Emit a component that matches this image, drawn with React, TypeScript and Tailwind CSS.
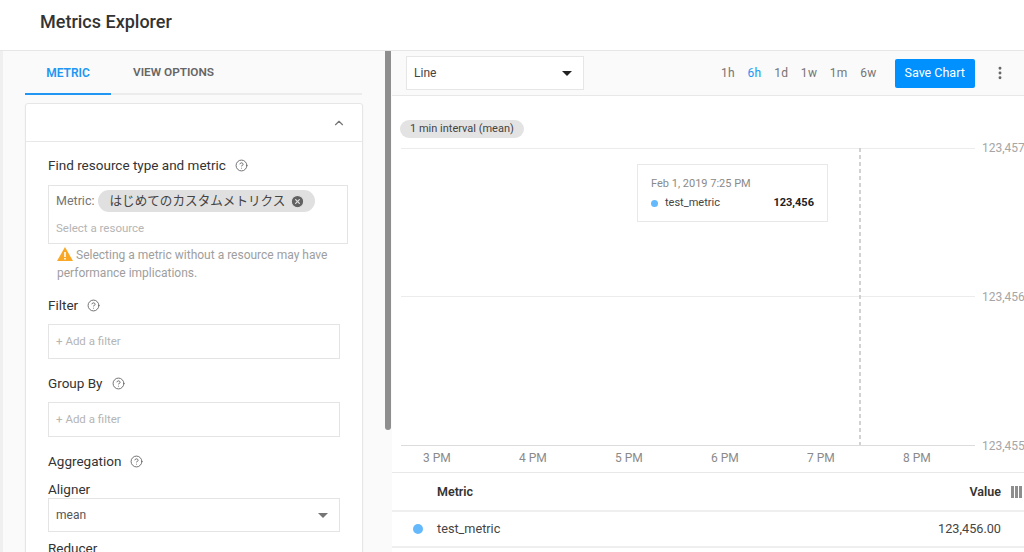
import { ChevronUp, CircleHelp, CircleX, EllipsisVertical } from 'lucide-react';

const RANGES = ['1h', '6h', '1d', '1w', '1m', '6w'];
const HOURS = [
  { label: '3 PM', left: 'left-[31px]' },
  { label: '4 PM', left: 'left-[127px]' },
  { label: '5 PM', left: 'left-[223px]' },
  { label: '6 PM', left: 'left-[319px]' },
  { label: '7 PM', left: 'left-[415px]' },
  { label: '8 PM', left: 'left-[511px]' },
];

function Caret({ className }: { className: string }) {
  return (
    <svg width="10" height="5" viewBox="0 0 10 5" className={className}>
      <path d="M0 0h10L5 5z" fill="currentColor" />
    </svg>
  );
}

function FieldLabel({ text, className }: { text: string; className: string }) {
  return (
    <div className={`flex items-center gap-[9px] text-[13.5px] leading-[20px] text-[#333] ${className}`}>
      <span>{text}</span>
      <CircleHelp className="size-[13px] text-[#666]" strokeWidth={1.7} />
    </div>
  );
}

function FilterInput() {
  return (
    <div className="flex h-[35px] w-[292px] items-center border border-[#e4e4e4] bg-white pl-[7px] text-[11.5px] text-[#b5b5b5]">
      + Add a filter
    </div>
  );
}

function LeftPanel() {
  return (
    <div className="relative h-full w-[392px] shrink-0 overflow-hidden border-l-[3px] border-[#efefef] bg-[#fafafa] pl-[22px]">
      <div className="flex h-[44px] w-[337px] border-b-2 border-[#ececec]">
        <div className="-mb-[2px] flex h-[44px] w-[86px] items-start justify-center border-b-2 border-[#2196f3] pt-[13px] text-[12px] font-semibold text-[#2196f3]">
          METRIC
        </div>
        <div className="ml-[22px] pt-[13px] text-[11.8px] font-semibold text-[#666]">VIEW OPTIONS</div>
      </div>

      <div className="mt-[8px] h-[460px] w-[338px] rounded-t-[3px] border border-[#e6e6e6] bg-white shadow-[0_1px_2px_rgba(0,0,0,0.06)]">
        <div className="flex h-[38px] items-center justify-end border-b border-[#e8e8e8] pr-[16px]">
          <ChevronUp className="size-[14px] text-[#757575]" strokeWidth={2} />
        </div>
        <div className="pl-[22px]">
          <FieldLabel text="Find resource type and metric" className="mt-[13px]" />
          <div className="mt-[10px] h-[59px] w-[300px] border border-[#e4e4e4] pl-[7px]">
            <div className="flex h-[29px] items-center pt-[1px] text-[12.5px] text-[#757575]">
              <span>Metric:</span>
              <div className="ml-[4px] flex h-[22px] w-[217px] items-center rounded-full bg-[#e0e0e0] pl-[11px] text-[12.6px] text-[#444]">
                <span className="whitespace-nowrap">はじめてのカスタムメトリクス</span>
                <CircleX className="ml-[5px] size-[15px] shrink-0 fill-[#616161] text-[#e0e0e0]" strokeWidth={2} />
              </div>
            </div>
            <div className="mt-[5px] text-[11.5px] leading-[16px] text-[#b5b5b5]">Select a resource</div>
          </div>
          <div className="ml-[9px] mt-[2px] w-[290px] text-[12px] leading-[18px] text-[#9e9e9e]">
            <svg width="16" height="14" viewBox="0 0 16 14" className="mb-[3px] mr-[3px] inline-block">
              <path d="M8 0l8 14H0z" fill="#f9a825" />
              <path d="M7.2 5h1.6v5H7.2zM7.2 11h1.6v1.5H7.2z" fill="#fff" />
            </svg>
            Selecting a metric without a resource may have performance implications.
          </div>
          <FieldLabel text="Filter" className="mt-[13px]" />
          <div className="mt-[9px]"><FilterInput /></div>
          <FieldLabel text="Group By" className="mt-[14px]" />
          <div className="mt-[9px]"><FilterInput /></div>
          <FieldLabel text="Aggregation" className="mt-[14px]" />
          <div className="mt-[9px] text-[13.5px] leading-[18px] text-[#333]">Aligner</div>
          <div className="flex h-[34px] w-[292px] items-center justify-between border border-[#e4e4e4] pl-[7px] pr-[11px] text-[12px] text-[#555]">
            mean
            <Caret className="text-[#757575]" />
          </div>
          <div className="mt-[6px] text-[13.5px] leading-[20px] text-[#333]">Reducer</div>
        </div>
      </div>

      <div className="absolute right-px top-0 h-[379px] w-[6px] rounded-b-full bg-[#8e8e8e]" />
    </div>
  );
}

function Toolbar() {
  return (
    <div className="flex h-[45px] items-center border-b border-[#e8e8e8] bg-[#fafafa] pl-[14px]">
      <div className="flex h-[34px] w-[178px] items-center justify-between border border-[#e6e6e6] bg-white pl-[7px] pr-[11px] text-[12px] text-[#444]">
        Line
        <Caret className="text-[#222]" />
      </div>
      <div className="ml-[137px] flex gap-[12.6px] text-[12px] text-[#757575]">
        {RANGES.map((r) => (
          <span key={r} className={`tracking-[0.3px] ${r === '6h' ? 'text-[#2196f3]' : ''}`}>{r}</span>
        ))}
      </div>
      <button className="ml-[18px] h-[29px] w-[80px] rounded-[2px] bg-[#0091ff] text-[12.5px] text-white">
        Save Chart
      </button>
      <EllipsisVertical className="ml-[17px] size-[16px] text-[#666]" strokeWidth={2.4} />
    </div>
  );
}

function Chart() {
  return (
    <div className="relative h-[376px] bg-white">
      <div className="absolute left-[8px] top-[24px] flex h-[18px] items-center rounded-full bg-[#e3e3e3] px-[10px] text-[11px] text-[#444]">
        1 min interval (mean)
      </div>

      <div className="absolute left-[9px] top-[52px] h-px w-[574px] bg-[#ececec]" />
      <div className="absolute left-[9px] top-[200px] h-px w-[574px] bg-[#ececec]" />
      <div className="absolute left-[9px] top-[349px] h-px w-[574px] bg-[#dcdcdc]" />
      <svg width="2" height="297" className="absolute left-[467px] top-[52px]">
        <line x1="1" y1="0" x2="1" y2="297" stroke="#c4c4c4" strokeWidth="1.5" strokeDasharray="4 3" />
      </svg>

      <span className="absolute left-[590px] top-[43px] text-[12px] text-[#a6a6a6]">123,457</span>
      <span className="absolute left-[590px] top-[192px] text-[12px] text-[#a6a6a6]">123,456</span>
      <span className="absolute left-[590px] top-[341px] text-[12px] text-[#a6a6a6]">123,455</span>

      <div className="absolute left-[245px] top-[68px] h-[58px] w-[191px] border border-[#e8e8e8] bg-white px-[13px] pt-[11px]">
        <div className="text-[11px] leading-[16px] text-[#8a8a8a]">Feb 1, 2019 7:25 PM</div>
        <div className="mt-[3px] flex items-center text-[11px] leading-[16px] text-[#444]">
          <span className="size-[7px] rounded-full bg-[#64b9fc]" />
          <span className="ml-[7px]">test_metric</span>
          <span className="ml-auto font-bold text-[#222]">123,456</span>
        </div>
      </div>

      {HOURS.map((h) => (
        <span key={h.label} className={`absolute top-[353px] text-[12px] text-[#8a8a8a] ${h.left}`}>{h.label}</span>
      ))}
    </div>
  );
}

function MetricTable() {
  return (
    <div className="border-t border-[#e8e8e8] bg-white text-[12.5px]">
      <div className="flex h-[39px] items-center border-b-2 border-[#efefef] pl-[45px] pt-[1px] font-semibold text-[#333]">
        <span>Metric</span>
        <span className="ml-auto">Value</span>
        <div className="ml-[10px] flex w-[13px] gap-[1px] overflow-hidden">
          <span className="h-[12px] w-[3px] shrink-0 bg-[#8e8e8e]" />
          <span className="h-[12px] w-[3px] shrink-0 bg-[#8e8e8e]" />
          <span className="h-[12px] w-[3px] shrink-0 bg-[#8e8e8e]" />
        </div>
      </div>
      <div className="flex h-[36px] items-center border-b-2 border-[#efefef] pl-[21px] pr-[23px] text-[12.7px] text-[#444]">
        <span className="size-[10px] rounded-full bg-[#64b9fc]" />
        <span className="ml-[14px]">test_metric</span>
        <span className="ml-auto">123,456.00</span>
      </div>
    </div>
  );
}

export default function App() {
  return (
    <div className="h-[552px] w-[1024px] overflow-hidden bg-white font-['Roboto','Noto_Sans_CJK_JP',sans-serif]">
      <div className="flex h-[51px] items-center border-b border-[#e6e6e6] pl-[40px] pb-[8px] text-[18px] font-medium text-[#333]">
        Metrics Explorer
      </div>
      <div className="flex h-[501px]">
        <LeftPanel />
        <div className="min-w-0 flex-1 overflow-hidden">
          <Toolbar />
          <Chart />
          <MetricTable />
        </div>
      </div>
    </div>
  );
}
